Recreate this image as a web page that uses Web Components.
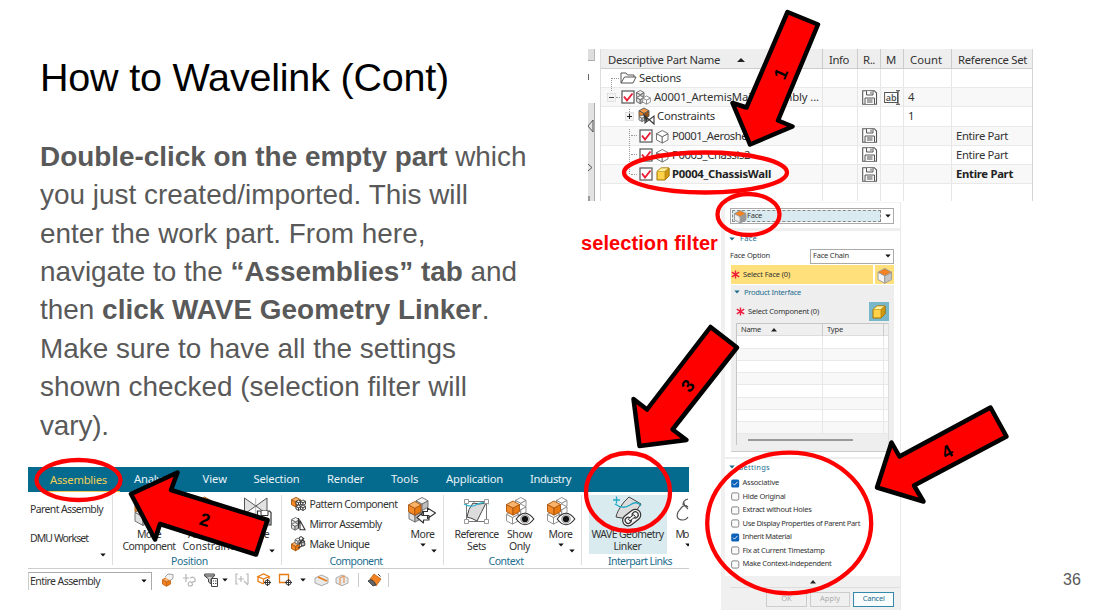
<!DOCTYPE html>
<html lang="en">
<head>
<meta charset="utf-8">
<title>How to Wavelink (Cont)</title>
<style>
  body { margin: 0; background: #fff; }
</style>
</head>
<body>
<wave-slide></wave-slide>
<script>
const cube = (x, y, s, fill, stroke = '#777', top = fill, side = fill) => {
  const h = s * .27;
  return `<g stroke="${stroke}" stroke-width=".9" stroke-linejoin="round">
    <path fill="${fill}" d="M${x} ${y + h}l${s * .5} ${h}v${s * .55}l${-s * .5} ${-h}z"/>
    <path fill="${side}" d="M${x + s} ${y + h}l${-s * .5} ${h}v${s * .55}l${s * .5} ${-h}z"/>
    <path fill="${top}" d="M${x} ${y + h}l${s * .5} ${-h}l${s * .5} ${h}l${-s * .5} ${h}z"/></g>`;
};
const OR = ['#f58a28', '#a8560f', '#fbb36a', '#e87a12'];
const GR = ['#e0e0e0', '#666', '#f4f4f4', '#bdbdbd'];
const orange = (x, y, s) => cube(x, y, s, ...OR);
const gray = (x, y, s) => cube(x, y, s, ...GR);
const eye = (x, y) => `<path d="M${x - 8.8} ${y}q8.800 -11.500 17.600 0q-8.800 11.500 -17.600 0z" fill="#fff" stroke="#333" stroke-width="1.200"/><circle cx="${x}" cy="${y}" r="4.300" fill="#ccc" stroke="#666" stroke-width=".6"/><circle cx="${x}" cy="${y}" r="3.100" fill="#111"/>`;

const ICONS = {
  folder: [17, 12, `<path d="M1 11V1h5l1.500 2H14v2M1 11L4.500 5H16l-3 6z" fill="#fff" stroke="#555"/>`],
  assembly: [15, 14, gray(.5, .5, 7.5) + gray(.5, 5.500, 7.500) + cube(6.800, 6, 7.500, '#fff', '#888')],
  constraints: [17, 16, cube(1, 0, 10, '#ef8220', '#555', '#f49a48', '#9a5313') + gray(1, 7, 6) + `<path d="M7 7v8l9-7v8l-9-8" fill="#fff" stroke="#333" stroke-width="1.1"/><path d="M5 5l3 9 2-3" fill="#333"/>`],
  part: [13, 12, cube(.5, .5, 11.5, '#fff', '#666')],
  gold: [14, 14, `<path d="M1 4.500L5 1h8v8l-4 4H1z" fill="#ffd24a" stroke="#a07300" stroke-linejoin="round"/><path d="M1 4.500L5 1h8l-4 3.500z" fill="#fff0a0" stroke="#b88a10" stroke-width=".6"/><path d="M9 4.500L13 1v8l-4 4z" fill="#d29a14" stroke="#a07300" stroke-width=".6"/>`],
  check: [14, 14, `<rect x="1" y="1" width="12" height="12" fill="#fff" stroke="#555" stroke-width="1.2"/><path d="M3 6.500l3 4 5.500-7" fill="none" stroke="#ec1c34" stroke-width="1.900"/>`],
  disk: [15, 15, `<path d="M.7 .7h11.600l2.200 2.300v11.300H.7z" fill="#fff" stroke="#555" stroke-width="1.100"/><path d="M4.500 1v4h6.500v-4M9 1.500v2.300M3 14V8h9.500v6" fill="#f5f5f5" stroke="#555"/><path d="M5 10h5.500M5 12h5.500" stroke="#555"/>`],
  abl: [17, 15, `<rect x=".6" y="2.500" width="13" height="10" fill="#fff" stroke="#555"/><path d="M14 1v13M12 .7h2M14 .7h2M12 14.300h2M14 14.300h2" stroke="#444"/><text x="1.800" y="10.800" font-family="Noto Sans" font-size="9" font-weight="600" fill="#555">ab</text>`],
  face: [13, 12, cube(.5, .5, 11.500, '#eee', '#999', '#f58220', '#999')],
  faceBig: [16, 14, cube(1, .5, 13.500, '#f5f5f5', '#999', '#f58220', '#c4c4c4')],
  star: [9, 9, `<path d="M4.500 .4v8.200M.8 2.200l7.400 4.600M8.200 2.200L.8 6.800" stroke="#ed1c3c" stroke-width="1.400"/>`],
  down: [6, 4, `<path d="M.3 .4h5.400L3 3.600z" fill="#111"/>`],
  downBlue: [6, 4, `<path d="M.3 .4h5.400L3 3.600z" fill="#1b6d8e"/>`],
  up: [8, 4, `<path d="M0 4h8L4 0z" fill="#222"/>`],
  upSmall: [6, 3.5, `<path d="M0 3.500h6L3 0z" fill="#222"/>`],
  minus: [9, 9, `<rect x=".5" y=".5" width="8" height="8" fill="#f3f3f3" stroke="#ccc" stroke-width=".5"/><path d="M2 4.500h5" stroke="#444"/>`],
  plus: [9, 9, `<rect x=".5" y=".5" width="8" height="8" fill="#f3f3f3" stroke="#ccc" stroke-width=".5"/><path d="M2 4.500h5M4.500 2v5" stroke="#222"/>`],
  move: [30, 30, orange(1, 1, 18) + gray(1, 12, 16)],
  constrain: [30, 30, orange(1, 1, 15) + gray(13, 10, 15)],
  save: [29, 30, `<path d="M1.500 2v16L24 2v16z" fill="#e2e2e2" stroke="#555"/><path d="M12.700 2v22" stroke="#888" stroke-width=".6"/><path d="M14.500 15h12l1.500 1.500V29H14.500z" fill="#fff" stroke="#333" stroke-width="1.200"/><path d="M18 15v4.500h7V15M17 29v-5.500h9V29" fill="#fff" stroke="#333"/>`],
  pattern: [15, 14, orange(.5, .3, 9) + cube(5, 3, 5, '#fff', '#333') + cube(9.500, 3, 5, '#fff', '#333') + cube(5, 8, 5, '#fff', '#333') + cube(9.500, 8, 5, '#fff', '#333')],
  mirror: [15, 14, gray(.5, .5, 8) + gray(.5, 5.500, 7) + `<path d="M7.500 1v10.500M9 12.800V3.500l5 9.300z" fill="#fff" stroke="#333" stroke-width="1.100"/>`],
  unique: [15, 15, orange(.5, 6, 8) + gray(4, 2, 6) + `<path d="M8 8l5-6M9 2l5 4M7 12l6-3" stroke="#333" stroke-width="1.300"/><circle cx="10" cy="2.500" r="1.800" fill="#fff" stroke="#333"/><circle cx="12" cy="8" r="2" fill="#bbb" stroke="#333"/>`],
  more: [29, 28, gray(8, .5, 12) + gray(1, 12, 12) + cube(.5, 4.500, 12.500, ...OR) + `<path d="M14 14.500h5.500v-3.500l8 5-8 5.500v-3H14zM21 18.500h-5.500v-3.500l-6.500 5.500 6.500 5.500v-3H21z" fill="#fff" stroke="#333" stroke-width="1.100" stroke-linejoin="round"/>`],
  refsets: [27, 27, `<path d="M3.500 3.500h20v20h-20z" fill="none" stroke="#777"/><path d="M10 5q6 2 13 0q-4 8-9 18q-5-3-10-4q1-8 6-14z" fill="#dcdcdc" stroke="#444"/><path d="M1 6q7 4 13 .5t12-.5" fill="none" stroke="#2bb5d0" stroke-width="1.300"/><g fill="#fff" stroke="#999"><path d="M1.500 1.500h4v4h-4zM21.500 1.500h4v4h-4zM1.500 21.500h4v4h-4zM21.500 21.500h4v4h-4z"/></g>`],
  show: [28, 28, cube(9.500, .5, 10.500, '#fff', '#888') + cube(9.500, 7, 10.500, '#fff', '#888') + cube(.5, 14, 12, '#fff', '#888') + cube(.5, 4, 13, ...OR) + eye(19, 22)],
  wave: [31, 31, `<path d="M4 21q1-6 8-15l5-5 12 7-5 7q-6 10-20 6z" fill="#dcdcdc" stroke="#444"/><path d="M3 8q8 6 15 1t11 1M1 4h7M4.500 .5v7" fill="none" stroke="#22aac6" stroke-width="1.300"/><g transform="rotate(-38 20 22)" fill="#f6f6f6" stroke="#333" stroke-width="1.200"><rect x="10" y="16" width="20" height="11" rx="5.500"/><rect x="12.500" y="18.500" width="6" height="6" rx="3"/><rect x="21.500" y="18.500" width="6" height="6" rx="3"/><path d="M16.500 20.500h7v2.500h-7z" stroke-width=".9"/></g>`],
  link: [12, 28, `<path d="M12 2q-5 1-5 6M12 10q-3-3-6 0l-4 5q-3 8 5 8q3 0 5-3M8 4q-1 4 4 8" fill="none" stroke="#555" stroke-width="1.200"/>`],
  t1: [12, 13, cube(.5, 4.500, 8, '#f58220', '#c9650f', '#fbb072', '#e87a12') + `<path d="M3 4l3-3 5 .5v4l-3 2" fill="#f2f2f2" stroke="#999" stroke-width=".9"/>`],
  t2: [14, 13, `<path d="M4 1v8M1 5h6M8 5q4-2 5 1t-3 3M6 11q2-4 4-1t-3 3z" stroke="#b5b5b5" fill="none" stroke-width="1.200"/>`],
  t3: [15, 14, `<path d="M.7 1h9.600v2L7 6v5L4.500 9V6L.7 3z" fill="#ccc" stroke="#444"/><path d="M.7 3h9.600" stroke="#444"/><path d="M7.500 5.500h6v8h-6zM9 8h1M9 10.500h1M11 8h1.500M11 10.500h1.500" fill="#fff" stroke="#444"/>`],
  t4: [14, 13, `<path d="M3 1H1v10h2M11 1h2v10M6 3v6M3 6h6M9 8l4 4" fill="none" stroke="#b9b9b9" stroke-width="1.200"/>`],
  t5: [15, 13, `<path d="M1 3.500L6.500 1 12 3.500 6.500 6zM1 3.500v4.800L6.500 11M12 3.500V6M6.500 6v5" fill="none" stroke="#e87a12" stroke-width="1.300"/><circle cx="10.500" cy="9.500" r="2.500" fill="#fff" stroke="#333"/><path d="M10.500 6v7M7 9.500h7" stroke="#333"/>`],
  t6: [15, 13, `<path d="M1.500 1.500h9v8h-9z" fill="#fff" stroke="#e87a12" stroke-width="1.300"/><circle cx="10.500" cy="9.500" r="2.500" fill="#fff" stroke="#333"/><path d="M10.500 6v7M7 9.500h7" stroke="#333"/>`],
  t7: [15, 12, `<path d="M1 4l6.500-3L14 4v5l-6.500 2.700L1 9z" fill="#e9e9e9" stroke="#aaa"/><path d="M4 3l9 4" stroke="#e87a12" stroke-width="1.400"/>`],
  t8: [14, 12, `<path d="M1 4l6-3 6 3v5l-6 2.700L1 9z" fill="#e9e9e9" stroke="#aaa"/><path d="M5 11V4l4-2v7" fill="none" stroke="#e8995c" stroke-width="1.200"/>`],
  t9: [15, 14, `<path d="M3 6l4-5 7 5-5 7q0-5-6-7z" fill="#f58220" stroke="#b5651a" stroke-width=".8"/><path d="M1 8q4-4 8 4l-3 1z" fill="#666" stroke="#333" stroke-width=".8"/><path d="M11 1l2.500 2.500" stroke="#333"/>`]
};

const define = (tag, html, extra) => customElements.define(tag, class extends HTMLElement {
  constructor() {
    super();
    this.attachShadow({ mode: 'open' }).innerHTML = typeof html === 'function' ? html(this) : html;
  }
  connectedCallback() { extra && extra(this); }
});

define('ui-icon', el => {
  const [w, h, body] = ICONS[el.getAttribute('name')];
  return `<style>:host{display:block;flex:none}svg{display:block;overflow:visible}</style>
    <svg width="${w}" height="${h}" viewBox="0 0 ${w} ${h}">${body}</svg>`;
});

/* ---------- slide text ---------- */
define('slide-text', `
<style>
  :host { display: flex; flex-direction: column; padding: 6px 0 0 12px; font-family: "Liberation Sans", Arial, sans-serif; color: #595959; }
  h1 { margin: 0 0 38.600px; font: 400 39.500px/44px "Liberation Sans", Arial, sans-serif; color: #000; }
  p { margin: 0; font-size: 27.900px; line-height: 38.450px; }
  p fit-text { display: table; }
</style>
<h1><fit-text w="409">How to Wavelink (Cont)</fit-text></h1>
<p>
<fit-text w="486.500"><b>Double-click on the empty part</b> which</fit-text>
<fit-text w="428">you just created/imported. This will</fit-text>
<fit-text w="385.500">enter the work part. From here,</fit-text>
<fit-text w="477">navigate to the <b>“Assemblies” tab</b> and</fit-text>
<fit-text w="449.500">then <b>click WAVE Geometry Linker</b>.</fit-text>
<fit-text w="416">Make sure to have all the settings</fit-text>
<fit-text w="427">shown checked (selection filter will</fit-text>
<fit-text w="69">vary).</fit-text>
</p>`);

/* ---------- part navigator ---------- */
define('nav-row', `
<style>
  :host { display: grid; grid-template-columns: 222px 35px 23px 23px 48px 79.500px; height: 19.200px; box-sizing: border-box; border-bottom: 1px solid #e9e9e9; font: 11.300px/18px "Noto Sans", sans-serif; color: #333; }
  :host([alt]) { background: #f8f8f8; }
  :host([bold]) { font-weight: 700; color: #222; }
  div { display: flex; align-items: center; border-right: 1px solid #e6e6e6; min-width: 0; box-sizing: border-box; }
  div:first-child { border-right: 1.500px solid #444; }
  div:last-child { border: 0; padding-left: 4px; }
  .c { justify-content: center; }
  .n { padding-left: 4px; }
</style>
<div><slot></slot></div><div></div><div class="c"><slot name="r"></slot></div><div class="c"><slot name="m"></slot></div><div class="n"><slot name="count"></slot></div><div><slot name="set"></slot></div>`);

define('part-navigator', `
<style>
  :host { display: flex; height: 152px; overflow: hidden; }
  .strip { width: 7px; margin-right: 5px; display: flex; flex-direction: column; }
  .strip i { display: block; background: #dedede; border-right: 1px solid #b8b8b8; border-bottom: 1px solid #aaa; box-sizing: border-box; }
  .main { width: 431.500px; border-left: 1px solid #ddd; border-right: 1.500px solid #d5d5d5; }
  .head { display: grid; grid-template-columns: 222px 35px 23px 23px 48px 79.500px; height: 20px; box-sizing: border-box; background: #eee; border-bottom: 1px solid #ccc; font: 11.300px/20px "Noto Sans", sans-serif; color: #333; }
  .head div { border-right: 1px solid #ccc; padding: 1px 0 0 6px; display: flex; align-items: center; box-sizing: border-box; gap: 17px; }
  .head div:first-child { padding-left: 7px; }
  .head div:last-child { border: 0; }
  .head .s { padding-left: 5px; }
  ui-icon, fit-text { flex: none; }
  .d { width: 6px; border-top: 1px dotted #999; margin-right: 1px; flex: none; }
  .tree { position: relative; }
</style>
<div class="strip"><i style="height:12px"></i><svg width="7" height="42"><path d="M.5 13v6" stroke="#666"/></svg>
<svg width="7" height="98" style="background:#e2e2e2"><path d="M6.500 0v98" stroke="#aaa"/><path d="M5 17v12L0 23zM0 61l4 3.500-4 3.500M1 93v5" fill="none" stroke="#555"/></svg></div>
<div class="main">
  <div class="head"><div><fit-text w="112">Descriptive Part Name</fit-text><ui-icon name="up"></ui-icon></div><div><fit-text w="20">Info</fit-text></div><div class="s"><fit-text w="12">R..</fit-text></div><div class="s"><fit-text w="11">M</fit-text></div><div><fit-text w="32">Count</fit-text></div><div style="padding-left:6px"><fit-text w="69">Reference Set</fit-text></div></div>
  <div class="tree">
  <nav-row><i class="d" style="margin-left:10px;width:8px"></i><ui-icon name="folder"></ui-icon><fit-text w="42" style="margin-left:2px">Sections</fit-text></nav-row>
  <nav-row alt><ui-icon name="minus" style="margin-left:6px"></ui-icon><i class="d" style="width:4px"></i><ui-icon name="check"></ui-icon><ui-icon name="assembly" style="margin-left:1px"></ui-icon><fit-text w="165" style="margin-left:3px">A0001_ArtemisMainAssembly ...</fit-text><ui-icon slot="r" name="disk"></ui-icon><ui-icon slot="m" name="abl"></ui-icon><span slot="count">4</span></nav-row>
  <nav-row><ui-icon name="plus" style="margin-left:24px"></ui-icon><ui-icon name="constraints" style="margin-left:4px"></ui-icon><fit-text w="58" style="margin-left:2px">Constraints</fit-text><span slot="count">1</span></nav-row>
  <nav-row alt><i class="d" style="margin-left:30px"></i><ui-icon name="check" style="margin-left:1px"></ui-icon><ui-icon name="part" style="margin-left:3px"></ui-icon><fit-text w="80" style="margin-left:3px">P0001_Aeroshell</fit-text><ui-icon slot="r" name="disk"></ui-icon><fit-text w="52" slot="set">Entire Part</fit-text></nav-row>
  <nav-row><i class="d" style="margin-left:30px"></i><ui-icon name="check" style="margin-left:1px"></ui-icon><ui-icon name="part" style="margin-left:3px"></ui-icon><fit-text w="78" style="margin-left:3px">P0003_Chassis2</fit-text><ui-icon slot="r" name="disk"></ui-icon><fit-text w="52" slot="set">Entire Part</fit-text></nav-row>
  <nav-row alt bold><i class="d" style="margin-left:30px"></i><ui-icon name="check" style="margin-left:1px"></ui-icon><ui-icon name="gold" style="margin-left:3px"></ui-icon><fit-text w="99" style="margin-left:2px">P0004_ChassisWall</fit-text><ui-icon slot="r" name="disk"></ui-icon><fit-text w="57" slot="set">Entire Part</fit-text></nav-row>
  <nav-row></nav-row>
  <svg width="60" height="120" style="position:absolute;left:0;top:0"><path d="M10.500 11v12M28.500 40v6M28.500 60v46" stroke="#999" stroke-dasharray="1 1"/></svg>
  </div>
</div>`);

/* ---------- dialog ---------- */
define('check-item', el => `
<style>
  :host { display: flex; align-items: center; height: 13.500px; gap: 3px; }
  svg { flex: none; }
</style>
<svg width="8.500" height="9">${el.hasAttribute('on')
  ? '<rect x=".2" y=".5" width="8" height="8" rx="1.500" fill="#0b62b8"/><path d="M2 4.600l1.500 1.500 3-3.200" fill="none" stroke="#fff" stroke-width=".9"/>'
  : '<rect x=".6" y=".9" width="7.200" height="7.200" rx="1.500" fill="#fafafa" stroke="#777" stroke-width=".9"/>'}</svg><slot></slot>`);

define('link-dialog', `
<style>
  :host { display: flex; flex-direction: column; width: 180px; height: 408px; box-sizing: border-box; background: #fff; border-left: 4px solid #f0f0f0; border-right: 1px solid #e9e9e9; border-top: 1px solid #f3f3f3; font: 7.500px/10px "Noto Sans", sans-serif; color: #333; }
  fit-text { padding-bottom: 1.600px; }
  .combo { box-sizing: border-box; height: 15.500px; border: 1px solid #aaa; display: flex; align-items: center; justify-content: space-between; background: #fff; padding-right: 2px; }
  .filter { margin: 5px 6px 4px 5px; }
  .filter .in { width: 149px; height: 12px; box-sizing: border-box; margin-left: 1px; border: 1px dashed #888; background: #d9ebf0; display: flex; align-items: center; gap: 0; }
  .band { height: 3px; background: #eee; }
  .h { display: flex; align-items: center; gap: 5px; color: #1b6d8e; }
  .h ui-icon { margin-bottom: 1px; }
  .row { display: flex; align-items: center; }
  .sel { margin: 1px 6px 0 6px; height: 19px; gap: 2px; }
  .sel .a { background: #ffe07b; flex: 1; height: 19px; display: flex; align-items: center; gap: 3px; }
  .sel .b { background: #ffe07b; width: 19px; height: 19px; display: grid; place-items: center; }
  .pi { margin: 1px 6px 0 6px; height: 167px; box-sizing: border-box; background: #eee; border-bottom: 1.500px solid #ccc; padding: 0 5px; display: flex; flex-direction: column; }
  .tb { border: 1px solid #c6c6c6; border-right-color: #ddd; border-bottom: 0; height: 122px; box-sizing: border-box; display: flex; flex-direction: column; }
  .tr { display: grid; grid-template-columns: 86px 61px 1fr; height: 12.280px; box-sizing: border-box; border-bottom: 1px solid #e9e9e9; background: #fff; }
  .tr:nth-child(odd) { background: #f8f8f8; }
  .tr.hd { background: #efefef; border-bottom-color: #ddd; }
  .tr div { border-right: 1px solid #e8e8e8; display: flex; align-items: center; padding-left: 4px; }
  .tr.hd div { border-color: #ccc; }
  .bar { width: 105px; height: 1.500px; background: #999; margin: 5px 0 0 11px; }
  .set { padding-left: 6px; height: 117px; box-sizing: border-box; }
  .foot { background: #f0f0f0; flex: 1; display: flex; flex-direction: column; align-items: center; }
  .btns { align-self: stretch; margin: 3px 0 0 5px; border-top: 1px solid #ddd; padding: 4px 6px 0 36px; display: flex; gap: 3px; }
  .btn { width: 41px; height: 15px; box-sizing: border-box; border: 1px solid #ccc; display: grid; place-items: center; color: #aaa; }
  .btn.on { border-color: #3487a8; color: #1b6d8e; background: #f8fcfd; }
  .x { width: 20px; height: 19px; background: #78b6ca; display: grid; place-items: center; }
</style>
<div class="combo filter"><div class="in"><ui-icon name="face" style="margin-left:1px"></ui-icon><fit-text w="15">Face</fit-text></div><ui-icon name="down"></ui-icon></div>
<div class="band"></div>
<div class="h" style="height:17px;padding-left:4px"><ui-icon name="downBlue"></ui-icon><fit-text w="17">Face</fit-text></div>
<div class="row" style="padding:1px 6px 0 5px;justify-content:space-between"><fit-text w="40">Face Option</fit-text><div class="combo" style="width:84px;padding-left:2px"><fit-text w="36">Face Chain</fit-text><ui-icon name="down"></ui-icon></div></div>
<div class="row sel"><div class="a"><ui-icon name="star"></ui-icon><fit-text w="47">Select Face (0)</fit-text></div><div class="b"><ui-icon name="faceBig"></ui-icon></div></div>
<div class="pi">
  <div class="h" style="height:15px;gap:4px;margin-left:-2px"><ui-icon name="downBlue"></ui-icon><fit-text w="57">Product Interface</fit-text></div>
  <div class="row" style="height:19px;margin:2px 0 2px;justify-content:space-between"><div class="row" style="gap:3px"><ui-icon name="star"></ui-icon><fit-text w="71">Select Component (0)</fit-text></div><div class="x"><ui-icon name="gold"></ui-icon></div></div>
  <div class="tb"><div class="tr hd"><div style="gap:10px"><fit-text w="20">Name</fit-text><ui-icon name="upSmall"></ui-icon></div><div><fit-text w="16">Type</fit-text></div></div>
  ${'<div class="tr"><div></div><div></div></div>'.repeat(8)}<div class="bar"></div></div>
</div>
<div style="height:5px"></div><div class="band" style="height:2px"></div>
<div class="set">
  <div class="h" style="height:17.500px;gap:4px;margin-left:-2px"><ui-icon name="downBlue"></ui-icon><fit-text w="31">Settings</fit-text></div>
  <check-item on><fit-text w="36.500">Associative</fit-text></check-item>
  <check-item><fit-text w="43">Hide Original</fit-text></check-item>
  <check-item><fit-text w="69">Extract without Holes</fit-text></check-item>
  <check-item><fit-text w="117.500">Use Display Properties of Parent Part</fit-text></check-item>
  <check-item on><fit-text w="49">Inherit Material</fit-text></check-item>
  <check-item><fit-text w="82">Fix at Current Timestamp</fit-text></check-item>
  <check-item><fit-text w="89">Make Context-independent</fit-text></check-item>
</div>
<div class="foot"><ui-icon name="upSmall" style="margin-top:4px"></ui-icon>
<div class="btns"><div class="btn"><fit-text w="10">OK</fit-text></div><div class="btn"><fit-text w="20">Apply</fit-text></div><div class="btn on"><fit-text w="22">Cancel</fit-text></div></div></div>`);

/* ---------- ribbon ---------- */
define('ribbon-button', `
<style>
  :host { display: flex; flex-direction: column; align-items: center; height: 59px; white-space: nowrap; line-height: 12px; flex: none; }
  .i { height: 33.500px; flex: none; display: grid; place-items: center; }
</style>
<div class="i"><slot name="icon"></slot></div><slot></slot>`);

define('ribbon-group', el => `
<style>
  :host { display: flex; flex-direction: column; box-sizing: border-box; border-right: 1px solid #ddd; height: 70px; margin-top: 3px; flex: none; }
  .b { display: flex; height: 60px; }
  .f { height: 14px; display: grid; grid-template-columns: 1fr; color: #1b6d8e; align-items: center; justify-items: center; line-height: 14px; }
  .f > * { grid-area: 1 / 1; }
  ui-icon { justify-self: end; margin: -5px 6px 0 0; }
</style>
<div class="b"><slot></slot></div><div class="f"><slot name="label"></slot>${el.hasAttribute('menu') ? '<ui-icon name="down"></ui-icon>' : ''}</div>`);

define('nx-ribbon', `
<style>
  :host { display: flex; flex-direction: column; width: 660.500px; height: 123px; overflow: hidden; font: 10.500px/12px "Noto Sans", sans-serif; color: #333; background: #fff; }
  .tabs { height: 24.500px; background: #046b8f; display: flex; align-items: center; color: #e9f3f6; font-size: 11.200px; padding-left: 15px; flex: none; }
  .tabs > * { flex: none; }
  .act { height: 22px; width: 77px; margin-bottom: -3px; box-sizing: border-box; border-bottom: 1.500px solid #f2c94c; color: #f2cf55; padding: 0 0 1px 7px; margin-right: 14px; display: flex; align-items: center; }
  .body { display: flex; height: 76.500px; border-bottom: 1px solid #ccc; flex: none; }
  .bar { display: flex; align-items: center; height: 21px; }
  .combo { box-sizing: border-box; width: 124px; height: 18px; margin-top: 2px; border: 1px solid #aaa; border-left-color: #ccc; border-bottom: 0; display: flex; align-items: center; justify-content: space-between; padding: 0 4px 0 1px; }
  .list { display: flex; flex-direction: column; padding: 0 0 0 9px; height: 60px; width: 114px; margin-top: -1px; }
  .list div { display: flex; align-items: center; gap: 4px; height: 20px; }
  .sep { width: 1px; height: 14px; background: #ccc; }
</style>
<div class="tabs"><span class="act"><fit-text w="57">Assemblies</fit-text></span><fit-text w="41" style="margin-right:27.500px">Analysis</fit-text><fit-text w="24.500" style="margin-right:26.500px">View</fit-text><fit-text w="46" style="margin-right:27.500px">Selection</fit-text><fit-text w="37" style="margin-right:27px">Render</fit-text><fit-text w="27.500" style="margin-right:27.500px">Tools</fit-text><fit-text w="57" style="margin-right:27px">Application</fit-text><fit-text w="41">Industry</fit-text></div>
<div class="body">
  <ribbon-group menu style="width:84.500px"><div style="padding:8px 0 0 2px;display:grid;row-gap:17px;height:41px"><fit-text w="73">Parent Assembly</fit-text><fit-text w="63">DMU Workset</fit-text></div></ribbon-group>
  <ribbon-group menu style="width:169px"><ribbon-button style="width:73px"><ui-icon slot="icon" name="move"></ui-icon><fit-text w="24">Move</fit-text><fit-text w="53">Component</fit-text></ribbon-button><ribbon-button style="width:50px"><ui-icon slot="icon" name="constrain"></ui-icon><fit-text w="45">Assembly</fit-text><fit-text w="56">Constraints</fit-text></ribbon-button><ribbon-button style="width:45px"><ui-icon slot="icon" name="save" style="margin-left:-1px"></ui-icon><fit-text w="24">Save</fit-text></ribbon-button><fit-text slot="label" w="37" style="margin-right:14px">Position</fit-text></ribbon-group>
  <ribbon-group menu style="width:162px"><div class="list"><div><ui-icon name="pattern"></ui-icon><fit-text w="88">Pattern Component</fit-text></div><div><ui-icon name="mirror"></ui-icon><fit-text w="72">Mirror Assembly</fit-text></div><div><ui-icon name="unique"></ui-icon><fit-text w="60">Make Unique</fit-text></div></div><ribbon-button style="width:36px"><ui-icon slot="icon" name="more"></ui-icon><fit-text w="24">More</fit-text><ui-icon name="down" style="margin-top:3px"></ui-icon></ribbon-button><fit-text slot="label" w="53" style="margin-right:12px">Component</fit-text></ribbon-group>
  <ribbon-group menu style="width:138px"><ribbon-button style="width:66px"><ui-icon slot="icon" name="refsets"></ui-icon><fit-text w="44">Reference</fit-text><fit-text w="19">Sets</fit-text></ribbon-button><ribbon-button style="width:20px"><ui-icon slot="icon" name="show"></ui-icon><fit-text w="25">Show</fit-text><fit-text w="21">Only</fit-text></ribbon-button><ribbon-button style="width:62px"><ui-icon slot="icon" name="show"></ui-icon><fit-text w="24">More</fit-text><ui-icon name="down" style="margin-top:3px"></ui-icon></ribbon-button><fit-text slot="label" w="35" style="margin-right:12px">Context</fit-text></ribbon-group>
  <ribbon-group style="width:130px;border:0"><ribbon-button style="width:78px;background:#d9ebef;margin-left:7px;"><ui-icon slot="icon" name="wave"></ui-icon><fit-text w="72">WAVE Geometry</fit-text><fit-text w="28">Linker</fit-text></ribbon-button><ribbon-button style="width:13px;margin-left:9px;align-items:flex-start"><ui-icon slot="icon" name="link"></ui-icon><fit-text w="12">Mo</fit-text><ui-icon name="down" style="margin:3px 0 0 9px"></ui-icon></ribbon-button><fit-text slot="label" w="64" style="margin-right:13px">Interpart Links</fit-text></ribbon-group>
</div>
<div class="bar"><div class="combo"><fit-text w="70">Entire Assembly</fit-text><ui-icon name="down"></ui-icon></div>
<ui-icon name="t1" style="margin-left:10px"></ui-icon><ui-icon name="t2" style="margin-left:8px"></ui-icon><ui-icon name="t3" style="margin-left:8px"></ui-icon><ui-icon name="down" style="margin-left:3px"></ui-icon><ui-icon name="t4" style="margin-left:7px"></ui-icon><ui-icon name="t5" style="margin-left:8px"></ui-icon><ui-icon name="t6" style="margin-left:6px"></ui-icon><ui-icon name="down" style="margin-left:7px"></ui-icon><ui-icon name="t7" style="margin-left:8px"></ui-icon><ui-icon name="t8" style="margin-left:6px"></ui-icon><span class="sep" style="margin-left:9px"></span><ui-icon name="t9" style="margin-left:8px"></ui-icon><span class="sep" style="margin-left:6px"></span></div>`);

/* ---------- callout rings and arrows ---------- */
define('slide-callouts', `
<style>
  :host { display: block; position: absolute; inset: 0; pointer-events: none; }
  svg { display: block; }
  text { font: 700 18px "Liberation Sans", Arial, sans-serif; text-anchor: middle; }
</style>
<svg width="1093" height="613">
  <g fill="none" stroke="#f00" stroke-width="4.300">
    <ellipse cx="705.500" cy="172.500" rx="81.500" ry="20"/>
    <ellipse cx="748.500" cy="214.500" rx="31" ry="20.500"/>
    <ellipse cx="789.200" cy="523" rx="82" ry="70.300"/>
    <ellipse cx="78.500" cy="480" rx="42" ry="20"/>
    <ellipse cx="628" cy="492" rx="42" ry="39"/>
  </g>
  <g fill="#f00" stroke="#000" stroke-width="4.500" stroke-linejoin="round">
    <path d="M787.500 12L818 24.500 778 120.500 792.500 126.500 750 144.500 732.500 103 746.500 107.500z"/>
    <path d="M131 494L177.500 472.500 171 490 267.500 520 256 554.500 160 524 155 539.500z"/>
    <path d="M710.500 327L737 347.500 672.500 429.500 686.500 440 639.500 446 633.500 399 647 409.500z"/>
    <path d="M990.500 407.500L1006.500 436.500 914 485.500 923.500 501.500 877 487.500 891.500 442.500 899.500 456.500z"/>
  </g>
  <text transform="translate(780.500 73.500) rotate(-67)" y="6.500">1</text>
  <text transform="translate(205 519.500) rotate(17)" y="6.500" font-style="italic">2</text>
  <text transform="translate(687.500 385.500) rotate(-51)" y="6.500">3</text>
  <text transform="translate(947 451.500) rotate(-29)" y="6.500">4</text>
</svg>`);

define('wave-slide', `
<style>
  :host { display: grid; position: relative; width: 1093px; height: 613px; overflow: hidden; background: #fff;
    grid-template-columns: 28px 560px 133px 312px 60px; grid-template-rows: 49px 153px 265px 143px 3px; }
  slide-text { grid-area: 2 / 2 / 4 / 3; }
  part-navigator { grid-area: 2 / 3 / 3 / 5; }
  link-dialog { grid-area: 3 / 4 / 5 / 5; }
  nx-ribbon { grid-area: 4 / 2 / 5 / 4; }
  .label { grid-area: 3 / 2 / 4 / 4; justify-self: end; margin: 30px 3px 0 0; font: 700 20px/23px "Liberation Sans", Arial, sans-serif; color: #f00; }
  .num { grid-area: 4 / 5 / 5 / 6; align-self: end; margin: 0 0 20px 30px; font: 16px/20px "Liberation Sans", Arial, sans-serif; color: #595959; }
</style>
<slide-text></slide-text>
<part-navigator></part-navigator>
<div class="label"><fit-text w="137">selection filter</fit-text></div>
<link-dialog></link-dialog>
<nx-ribbon></nx-ribbon>
<div class="num">36</div>
<slide-callouts></slide-callouts>`);

/* Spreads a run of text over the width given in pixels. */
define('fit-text', `<style>:host{display:inline-block;white-space:nowrap;flex:none}</style><slot></slot>`, el => {
  const want = +el.getAttribute('w'), have = el.getBoundingClientRect().width;
  if (want && have) el.style.letterSpacing = (want - have) / el.textContent.length + 'px';
});
</script>
</body>
</html>
